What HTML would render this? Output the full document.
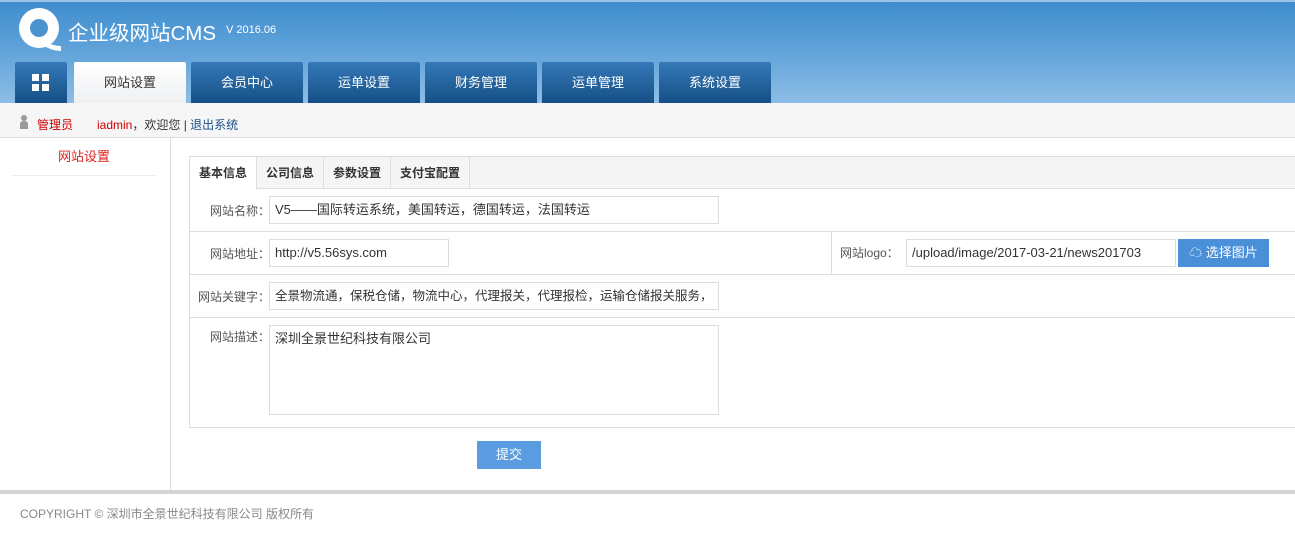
<!DOCTYPE html>
<html><head><meta charset="utf-8"><style>
*{margin:0;padding:0;box-sizing:border-box}
body{width:1295px;height:534px;overflow:hidden;background:#fff;font-family:"Liberation Sans","Noto Sans CJK SC",sans-serif;font-size:12px;color:#333;position:relative}
.hd{position:absolute;left:0;top:0;width:1295px;height:103px;background:linear-gradient(#3f8dcd,#5a9fd8 40%,#8dbde6);border-top:2px solid #9cc4e6}
.logo{position:absolute;left:17px;top:6px;width:46px;height:44px}
.title{position:absolute;left:68px;top:14px;color:#fff;font-size:20.5px}
.ver{position:absolute;left:226px;top:22px;color:#fff;font-size:11px}
.tab{position:absolute;top:62px;height:41px;width:112px;background:linear-gradient(#3479b8,#164f86);color:#fff;font-size:13px;text-align:center;line-height:41px;border-radius:2px 2px 0 0}
.tab.on{background:linear-gradient(#fff,#eef0f2);color:#333}
.bar{position:absolute;top:103px;left:0;width:1295px;height:35px;background:#f6f6f6;border-bottom:1px solid #ddd;font-size:12px;line-height:44px}
.side{position:absolute;left:0;top:138px;width:171px;height:352px;border-right:1px solid #ddd}
.panel{position:absolute;left:189px;top:156px;width:1110px;height:272px;border:1px solid #ddd}
.tabs{height:32px;background:#f5f5f5;border-bottom:1px solid #ddd;position:relative}
.t{position:absolute;top:0;height:32px;line-height:32px;font-weight:bold;font-size:12px;text-align:center;border-right:1px solid #ddd}
.row{position:absolute;left:0;width:1110px;border-bottom:1px solid #ddd}
.lb{position:absolute;right:1030px;width:90px;text-align:right;color:#555;font-size:12px}
.in{position:absolute;left:79px;height:28px;border:1px solid #ddd;font-size:13px;color:#333;padding-left:5px;line-height:26px;white-space:nowrap;overflow:hidden;background:#fff}
</style></head><body>
<div class="hd">
<svg class="logo" viewBox="0 0 46 44"><circle cx="22" cy="20" r="20" fill="#fff"/><circle cx="22" cy="20" r="9" fill="#4a93cf"/><path d="M30 34 Q36 38 44 38 L44 43 Q34 43 26 37Z" fill="#fff"/></svg>
<div class="title">企业级网站CMS</div><div class="ver">V 2016.06</div>
</div>
<div class="tab" style="left:15px;width:52px;top:62px"><svg width="18" height="18" viewBox="0 0 18 18" style="margin-top:12px"><rect x="0" y="0" width="7" height="7" fill="#fff"/><rect x="10" y="0" width="7" height="7" fill="#fff"/><rect x="0" y="10" width="7" height="7" fill="#fff"/><rect x="10" y="10" width="7" height="7" fill="#fff"/></svg></div>
<div class="tab on" style="left:74px">网站设置</div>
<div class="tab" style="left:191px">会员中心</div>
<div class="tab" style="left:308px">运单设置</div>
<div class="tab" style="left:425px">财务管理</div>
<div class="tab" style="left:542px">运单管理</div>
<div class="tab" style="left:659px">系统设置</div>
<div class="bar"><svg width="8" height="14" style="position:absolute;left:20px;top:12px"><circle cx="4" cy="3" r="3" fill="#999"/><path d="M0 14 V9 Q0 6 4 6 Q8 6 8 9 V14Z" fill="#999"/></svg><span style="position:absolute;left:37px;color:#c00">管理员</span><span style="position:absolute;left:97px"><span style="color:#c00">iadmin</span>，欢迎您 | <span style="color:#1a4e8a">退出系统</span></span></div>
<div class="side"><div style="margin:10px 14px 0 12px;border-bottom:1px solid #eee;text-align:center;color:#d22;font-size:13px;height:28px;line-height:18px">网站设置</div></div>
<div class="panel">
<div class="tabs"><div class="t" style="left:0;width:67px;background:#fff;height:33px">基本信息</div><div class="t" style="left:67px;width:67px">公司信息</div><div class="t" style="left:134px;width:67px">参数设置</div><div class="t" style="left:201px;width:79px">支付宝配置</div></div>
<div class="row" style="top:32px;height:43px"><div class="lb" style="top:13px">网站名称：</div><div class="in" style="top:7px;width:450px">V5——国际转运系统，美国转运，德国转运，法国转运</div></div>
<div class="row" style="top:75px;height:43px"><div class="lb" style="top:13px">网站地址：</div><div class="in" style="top:7px;width:180px">http://v5.56sys.com</div>
<div style="position:absolute;left:641px;top:0;height:42px;border-left:1px solid #ddd"></div>
<div style="position:absolute;left:650px;top:12px;color:#555">网站logo：</div>
<div class="in" style="left:716px;top:7px;width:270px">/upload/image/2017-03-21/news201703</div>
<div style="position:absolute;left:988px;top:7px;width:91px;height:28px;background:#4a90d9;color:#fff;font-size:13px;line-height:28px;text-align:center">☁ 选择图片</div></div>
<div class="row" style="top:118px;height:43px"><div class="lb" style="top:13px">网站关键字：</div><div class="in" style="top:7px;width:450px;font-size:12.5px">全景物流通，保税仓储，物流中心，代理报关，代理报检，运输仓储报关服务，</div></div>
<div class="row" style="top:161px;height:110px;border-bottom:none"><div class="lb" style="top:10px">网站描述：</div><div class="in" style="top:7px;width:450px;height:90px;line-height:26px">深圳全景世纪科技有限公司</div></div>
</div>
<div style="position:absolute;left:477px;top:441px;width:64px;height:28px;background:#5b9be0;color:#fff;font-size:13px;text-align:center;line-height:28px">提交</div>
<div style="position:absolute;left:0;top:490px;width:1295px;height:4px;background:#d4d4d4"></div>
<div style="position:absolute;left:20px;top:505px;color:#888;font-size:12px">COPYRIGHT © 深圳市全景世纪科技有限公司 版权所有</div>
</body></html>
